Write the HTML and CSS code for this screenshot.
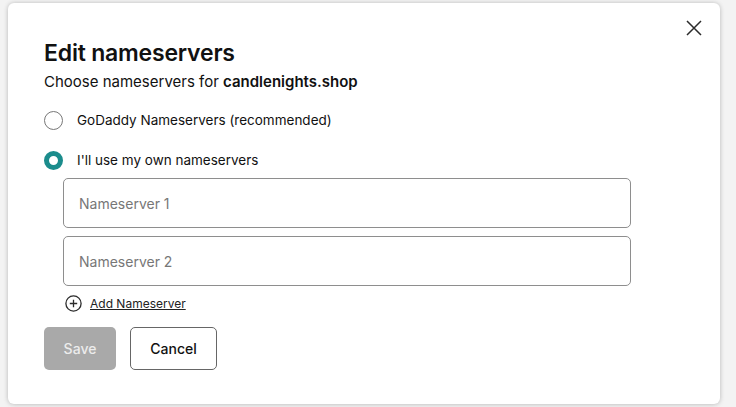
FILE: index.html
```html
<!DOCTYPE html>
<html>
<head>
<meta charset="utf-8">
<link rel="stylesheet" href="styles.css">
</head>
<body>
<div class="page">
  <div class="modal">
    <button class="close" aria-label="Close">
      <svg width="16" height="16" viewBox="0 0 16 16"><path d="M1 1 L15 15 M15 1 L1 15" stroke="#2b2b2b" stroke-width="1.5" fill="none"/></svg>
    </button>
    <h1 class="title">Edit nameservers</h1>
    <p class="subtitle">Choose nameservers for <b>candlenights.shop</b></p>
    <div class="options">
      <label class="option"><span class="radio"></span><span>GoDaddy Nameservers (recommended)</span></label>
      <label class="option"><span class="radio checked"></span><span>I'll use my own nameservers</span></label>
    </div>
    <div class="fields">
      <div class="field">Nameserver 1</div>
      <div class="field">Nameserver 2</div>
      <div class="add">
        <svg width="17" height="17" viewBox="0 0 17 17"><circle cx="8.5" cy="8.5" r="7.6" stroke="#2b2b2b" stroke-width="1.3" fill="none"/><path d="M8.5 4.8 V12.2 M4.8 8.5 H12.2" stroke="#2b2b2b" stroke-width="1.3"/></svg>
        <span class="add-link">Add Nameserver</span>
      </div>
    </div>
    <div class="actions">
      <button class="btn save">Save</button>
      <button class="btn cancel">Cancel</button>
    </div>
  </div>
</div>
</body>
</html>
```
FILE: styles.css
```css
* { box-sizing: border-box; }
html, body { margin: 0; padding: 0; }
body {
  background: #f3f3f3;
  font-family: Inter, "Noto Sans", sans-serif;
  color: #111;
  width: 736px;
  height: 407px;
  overflow: hidden;
}
.page {
  padding: 3px 0 0 8px;
}
.modal {
  position: relative;
  width: 712px;
  height: 401px;
  background: #fff;
  border-radius: 6px;
  box-shadow: 0 0 4px rgba(0,0,0,0.18), 0 1px 6px rgba(0,0,0,0.08);
  padding: 34px 36px 0 36px;
}
.close {
  position: absolute;
  top: 16px;
  right: 17px;
  width: 18px;
  height: 18px;
  border: 0;
  background: none;
  padding: 1px;
  display: flex;
}
.title {
  margin: 0;
  font-size: 23px;
  font-weight: 600;
  line-height: 32px;
  letter-spacing: -0.2px;
  color: #111;
}
.subtitle {
  margin: 2px 0 0 0;
  font-size: 15px;
  line-height: 22px;
  color: #111;
}
.subtitle b { font-weight: 600; }
.options {
  display: flex;
  flex-direction: column;
  gap: 18px;
  margin-top: 16px;
}
.option {
  display: flex;
  align-items: center;
  gap: 14px;
  font-size: 13.5px;
  line-height: 22px;
  color: #111;
}
.radio {
  width: 19px;
  height: 19px;
  border-radius: 50%;
  border: 1px solid #777;
  flex: none;
}
.radio.checked {
  border: 5px solid #1b8c8c;
  background: #fff;
}
.fields {
  margin-top: 7px;
  margin-left: 19px;
  width: 568px;
  display: flex;
  flex-direction: column;
  gap: 8px;
}
.field {
  height: 50px;
  border: 1.5px solid #8e8e8e;
  border-radius: 5px;
  padding: 0 15px;
  display: flex;
  align-items: center;
  font-size: 14px;
  color: #777;
}
.add {
  display: flex;
  align-items: center;
  gap: 8px;
  margin-left: 2px;
  height: 18px;
  font-size: 12px;
}
.add-link {
  text-decoration: underline;
  color: #222;
}
.actions {
  display: flex;
  gap: 14px;
  margin-top: 15px;
}
.btn {
  height: 43px;
  border-radius: 5px;
  font-family: Inter, "Noto Sans", sans-serif;
  font-size: 14px;
  font-weight: 500;
  padding: 0;
}
.save {
  width: 72px;
  background: #a9a9a9;
  color: #ececec;
  border: 0;
}
.cancel {
  width: 87px;
  background: #fff;
  color: #111;
  border: 1px solid #666;
}
```
